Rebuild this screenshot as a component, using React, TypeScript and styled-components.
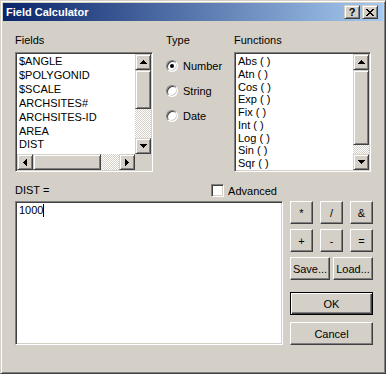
import styled, { createGlobalStyle, css } from "styled-components"

const GlobalStyle = createGlobalStyle`
html, body {
  margin: 0;
  padding: 0;
  background: #d4d0c8;
}
body {
  font-family: "Liberation Sans", Arial, sans-serif;
  font-size: 11px;
  color: #000;
}
`

const FIELDS = ["$ANGLE", "$POLYGONID", "$SCALE", "ARCHSITES#", "ARCHSITES-ID", "AREA", "DIST"]
const FUNCS = ["Abs ( )", "Atn ( )", "Cos ( )", "Exp ( )", "Fix ( )", "Int ( )", "Log ( )", "Sin ( )", "Sqr ( )"]

const raised = css`
  background: #d4d0c8;
  border: 1px solid;
  border-color: #d4d0c8 #404040 #404040 #d4d0c8;
  box-shadow: inset 1px 1px #fff, inset -1px -1px #808080;
`

const sunken = css`
  background: #fff;
  border: 1px solid;
  border-color: #808080 #fff #fff #808080;
  box-shadow: inset 1px 1px #404040, inset -1px -1px #d4d0c8;
`

const ARROWS: Record<string, string> = {
  up: "M3 0h1v1h-1z M2 1h3v1h-3z M1 2h5v1h-5z M0 3h7v1h-7z",
  down: "M0 0h7v1h-7z M1 1h5v1h-5z M2 2h3v1h-3z M3 3h1v1h-1z",
  left: "M3 0h1v7h-1z M2 1h1v5h-1z M1 2h1v3h-1z M0 3h1v1h-1z",
  right: "M0 0h1v7h-1z M1 1h1v5h-1z M2 2h1v3h-1z M3 3h1v1h-1z",
}

function Arrow({ dir }: { dir: "up" | "down" | "left" | "right" }) {
  const flat = dir === "up" || dir === "down"
  return (
    <svg width={flat ? 7 : 4} height={flat ? 4 : 7} shapeRendering="crispEdges">
      <path d={ARROWS[dir]} fill="#000" />
    </svg>
  )
}

function App() {
  return (
    <>
      <GlobalStyle />
      <Window>
        <TitleBar>
          <TitleText>Field Calculator</TitleText>
          <CaptionButton>?</CaptionButton>
          <CaptionButton $gap>
            <svg width="8" height="7" shapeRendering="crispEdges">
              <path
                d="M0 0h2v1h-2z M6 0h2v1h-2z M1 1h2v1h-2z M5 1h2v1h-2z M2 2h4v1h-4z M3 3h2v1h-2z M2 4h4v1h-4z M1 5h2v1h-2z M5 5h2v1h-2z M0 6h2v1h-2z M6 6h2v1h-2z"
                fill="#000"
              />
            </svg>
          </CaptionButton>
        </TitleBar>

        <Body>
          <TopRow>
            {/* fields list */}
            <Column $w={138}>
              <Label>Fields</Label>
              <ListBox $w={138} $hscroll>
                <Items $lh={13.9}>
                  {FIELDS.map((f) => (
                    <div key={f}>{f}</div>
                  ))}
                </Items>
                <VScroll>
                  <ScrollBtn><Arrow dir="up" /></ScrollBtn>
                  <Thumb $size={39} />
                  <Track />
                  <ScrollBtn><Arrow dir="down" /></ScrollBtn>
                </VScroll>
                <HScroll>
                  <ScrollBtn><Arrow dir="left" /></ScrollBtn>
                  <Thumb $size={68} $horiz />
                  <Track />
                  <ScrollBtn><Arrow dir="right" /></ScrollBtn>
                </HScroll>
                <Corner />
              </ListBox>
            </Column>

            {/* type radios */}
            <Column $w={68} $ml={13}>
              <Label>Type</Label>
              <Options>
                <RadioRow>
                  <Radio $checked />
                  Number
                </RadioRow>
                <RadioRow>
                  <Radio />
                  String
                </RadioRow>
                <RadioRow>
                  <Radio />
                  Date
                </RadioRow>
              </Options>
            </Column>

            {/* functions list */}
            <Column $w={137}>
              <Label>Functions</Label>
              <ListBox $w={137}>
                <Items $lh={12.75}>
                  {FUNCS.map((f) => (
                    <div key={f}>{f}</div>
                  ))}
                </Items>
                <VScroll>
                  <ScrollBtn><Arrow dir="up" /></ScrollBtn>
                  <Thumb $size={75} />
                  <Track />
                  <ScrollBtn><Arrow dir="down" /></ScrollBtn>
                </VScroll>
              </ListBox>
            </Column>
          </TopRow>

          <ExprHeader>
            <Label>DIST =</Label>
            <CheckWrap>
              <CheckBox />
              Advanced
            </CheckWrap>
          </ExprHeader>

          <ExprRow>
            <ExprBox>
              1000<Caret />
            </ExprBox>
            <ButtonsCol>
              <BtnRow>
                <PushButton $w={23}>*</PushButton>
                <PushButton $w={23}>/</PushButton>
                <PushButton $w={23}>&amp;</PushButton>
              </BtnRow>
              <BtnRow $mt={5}>
                <PushButton $w={23}>+</PushButton>
                <PushButton $w={23}>-</PushButton>
                <PushButton $w={23}>=</PushButton>
              </BtnRow>
              <BtnRow $mt={5}>
                <PushButton $w={40}>Save...</PushButton>
                <PushButton $w={40}>Load...</PushButton>
              </BtnRow>
              <BtnRow $mt={12}>
                <PushButton $w={83} $default>OK</PushButton>
              </BtnRow>
              <BtnRow $mt={7}>
                <PushButton $w={83}>Cancel</PushButton>
              </BtnRow>
            </ButtonsCol>
          </ExprRow>
        </Body>
      </Window>
    </>
  )
}

export default App


const Window = styled.div`
width: 386px;
height: 374px;
box-sizing: border-box;
background: #d4d0c8;
border: 1px solid;
border-color: #d4d0c8 #404040 #404040 #d4d0c8;
box-shadow: inset 1px 1px #fff, inset -1px -1px #808080;
padding: 2px;
display: flex;
flex-direction: column;
`

const TitleBar = styled.div`
height: 18px;
flex: none;
display: flex;
align-items: center;
padding: 0 5px 0 3px;
background: linear-gradient(to right, #0a246a, #a6caf0);
color: #fff;
`

const TitleText = styled.span`
flex: 1;
font-weight: bold;
font-size: 11px;
`

const CaptionButton = styled.div<{ $gap?: boolean }>`
width: 16px;
height: 14px;
box-sizing: border-box;
${raised}
display: flex;
align-items: center;
justify-content: center;
color: #000;
font-weight: bold;
font-size: 11px;
margin-left: ${(p) => (p.$gap ? 2 : 0)}px;
`

const Body = styled.div`
flex: 1;
padding: 13px 0 0 12px;
display: flex;
flex-direction: column;
`

const TopRow = styled.div`
display: flex;
`

const Column = styled.div<{ $w: number; $ml?: number }>`
width: ${(p) => p.$w}px;
margin-left: ${(p) => p.$ml || 0}px;
display: flex;
flex-direction: column;
`

const Label = styled.div`
height: 13px;
line-height: 13px;
white-space: nowrap;
`

const ListBox = styled.div<{ $w: number; $hscroll?: boolean }>`
margin-top: 5px;
width: ${(p) => p.$w}px;
height: 120px;
box-sizing: border-box;
${sunken}
padding: 1px;
display: grid;
grid-template-columns: 1fr 16px;
grid-template-rows: ${(p) => (p.$hscroll ? "1fr 16px" : "1fr")};
`

const Items = styled.div<{ $lh: number }>`
overflow: hidden;
padding: 1px 0 0 2px;
line-height: ${(p) => p.$lh}px;
white-space: nowrap;
`

const VScroll = styled.div`
display: flex;
flex-direction: column;
`

const HScroll = styled.div`
display: flex;
`

const ScrollBtn = styled.div`
width: 16px;
height: 16px;
flex: none;
box-sizing: border-box;
${raised}
display: flex;
align-items: center;
justify-content: center;
`

const Thumb = styled.div<{ $size: number; $horiz?: boolean }>`
flex: none;
box-sizing: border-box;
${raised}
${(p) => (p.$horiz ? `width: ${p.$size}px;` : `height: ${p.$size}px;`)}
`

const Track = styled.div`
flex: 1;
background: repeating-conic-gradient(#fff 0 25%, #d4d0c8 0 50%) 0 0 / 2px 2px;
`

const Corner = styled.div`
background: #d4d0c8;
`

const Options = styled.div`
margin-top: 12px;
display: flex;
flex-direction: column;
gap: 12px;
`

const RadioRow = styled.div`
display: flex;
align-items: center;
gap: 5px;
height: 13px;
white-space: nowrap;
`

const Radio = styled.span<{ $checked?: boolean }>`
position: relative;
width: 12px;
height: 12px;
flex: none;
box-sizing: border-box;
border-radius: 50%;
${sunken}
&::after {
  content: "";
  display: ${(p) => (p.$checked ? "block" : "none")};
  position: absolute;
  left: 3px;
  top: 3px;
  width: 4px;
  height: 4px;
  border-radius: 50%;
  background: #000;
}
`

const ExprHeader = styled.div`
margin-top: 12px;
width: 268px;
height: 13px;
display: flex;
align-items: center;
justify-content: space-between;
`

const CheckWrap = styled.div`
display: flex;
align-items: center;
gap: 4px;
margin-right: 6px;
`

const CheckBox = styled.span`
width: 13px;
height: 13px;
box-sizing: border-box;
${sunken}
`

const ExprRow = styled.div`
margin-top: 4px;
display: flex;
gap: 7px;
`

const ExprBox = styled.div`
width: 268px;
height: 144px;
box-sizing: border-box;
${sunken}
padding: 2px 2px 0 3px;
line-height: 13px;
`

const Caret = styled.span`
display: inline-block;
width: 1px;
height: 13px;
background: #000;
vertical-align: top;
`

const ButtonsCol = styled.div`
width: 83px;
display: flex;
flex-direction: column;
`

const BtnRow = styled.div<{ $mt?: number }>`
display: flex;
justify-content: space-between;
margin-top: ${(p) => p.$mt || 0}px;
`

const PushButton = styled.div<{ $w: number; $default?: boolean }>`
width: ${(p) => p.$w}px;
height: 23px;
box-sizing: border-box;
background: #d4d0c8;
border: 1px solid;
display: flex;
align-items: center;
justify-content: center;
white-space: nowrap;
${(p) =>
  p.$default
    ? `border-color: #000; box-shadow: inset 1px 1px #fff, inset -1px -1px #404040, inset -2px -2px #808080;`
    : `border-color: #fff #404040 #404040 #fff; box-shadow: inset -1px -1px #808080;`}
`
